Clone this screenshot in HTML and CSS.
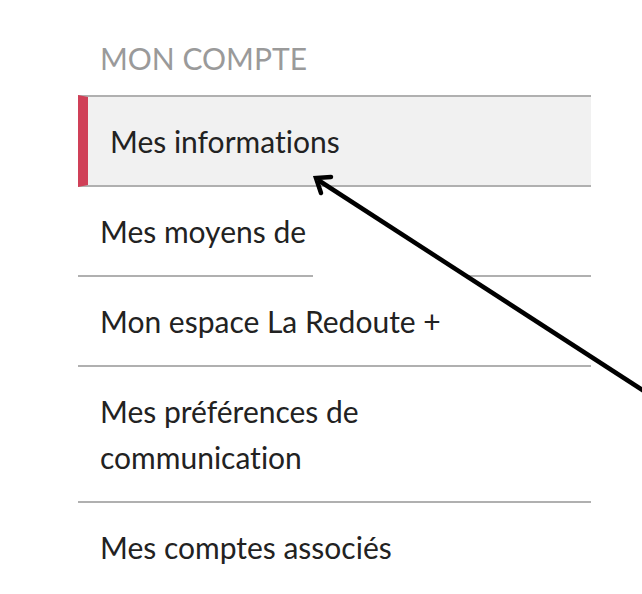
FILE: index.html
```html
<!DOCTYPE html>
<html lang="fr">
<head>
    <meta charset="UTF-8">
    <meta name="viewport" content="width=device-width, initial-scale=1.0">
    <title>Mon compte</title>
    <link rel="stylesheet" href="styles.css">
</head>
<body>
    <nav class="account-nav">
        <h2 class="nav-title">MON COMPTE</h2>
        <ul class="nav-list">
            <li class="nav-item active"><a href="#">Mes informations</a></li>
            <li class="nav-item split"><a href="#">Mes moyens de</a></li>
            <li class="nav-item"><a href="#">Mon espace La Redoute +</a></li>
            <li class="nav-item"><a href="#">Mes préférences de communication</a></li>
            <li class="nav-item last"><a href="#">Mes comptes associés</a></li>
        </ul>
    </nav>

    <!-- Flèche d'annotation par-dessus le menu -->
    <svg class="annotation" width="642" height="594" viewBox="0 0 642 594">
        <line x1="644" y1="391" x2="318" y2="180" stroke="#000" stroke-width="4.5"/>
        <polyline points="331,177 316,178 321,193" fill="none" stroke="#000" stroke-width="4.5" stroke-linejoin="miter" stroke-linecap="round"/>
    </svg>
</body>
</html>
```

FILE: styles.css
```css
/* Style général */
body {
    margin: 0;
    font-family: 'Lato', 'Open Sans', sans-serif;
    font-variant-ligatures: none;
    background: #fff;
    color: #222;
    overflow: hidden;
}

/* Menu du compte */
.account-nav {
    width: 513px;
    margin-left: 78px;
    padding-top: 35px;
}

.nav-title {
    margin: 0 0 14px;
    padding-left: 22px;
    font-size: 30px;
    font-weight: 400;
    line-height: 46px;
    color: #9a9a9a;
}

.nav-list {
    list-style: none;
    margin: 0;
    padding: 0;
}

.nav-item {
    border-bottom: 2px solid #b0b0b0;
}

.nav-item:first-child {
    border-top: 2px solid #b0b0b0;
}

.nav-item a {
    display: block;
    padding: 21px 120px 21px 22px;
    font-size: 30px;
    line-height: 46px;
    color: #222;
    text-decoration: none;
}

/* Élément actif */
.nav-item.active {
    background: #f1f1f1;
    border-left: 10px solid #d04058;
}

/* Ligne interrompue sous "Mes moyens de" */
.nav-item.split {
    border-bottom: none;
    padding-bottom: 2px;
    background: linear-gradient(to right, #b0b0b0 0 235px, transparent 235px 391px, #b0b0b0 391px) bottom / 100% 2px no-repeat;
}

.nav-item.last {
    border-bottom: none;
}

.annotation {
    position: absolute;
    top: 0;
    left: 0;
    pointer-events: none;
}
```
